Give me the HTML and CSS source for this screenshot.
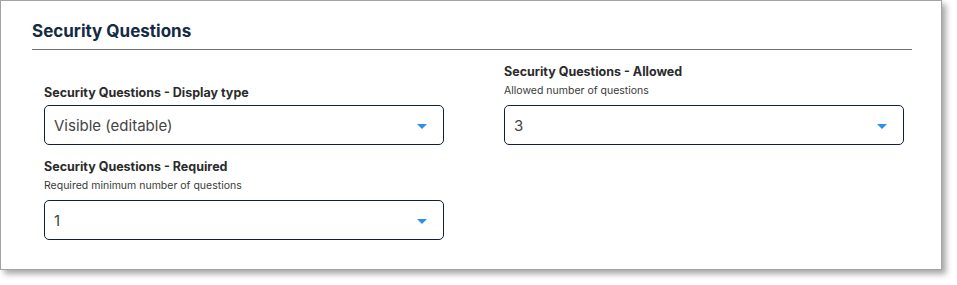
FILE: index.html
```html
<!DOCTYPE html>
<html lang="en">
<head>
<meta charset="utf-8">
<title>Security Questions</title>
<link rel="stylesheet" href="styles.css">
</head>
<body>
<div class="page">
<div class="card">
  <div class="card-header">
    <h2 class="card-title">Security Questions</h2>
  </div>
  <div class="fields">
    <div class="field">
      <div class="field-label">Security Questions - Display type</div>
      <div class="select">
        <span class="select-value">Visible (editable)</span>
        <svg class="caret" width="10" height="5" viewBox="0 0 10 5"><path d="M0 0H10L5 5Z" fill="#2a8ff0"/></svg>
      </div>
    </div>
    <div class="field">
      <div class="field-label">Security Questions - Allowed</div>
      <div class="field-help">Allowed number of questions</div>
      <div class="select">
        <span class="select-value">3</span>
        <svg class="caret" width="10" height="5" viewBox="0 0 10 5"><path d="M0 0H10L5 5Z" fill="#2a8ff0"/></svg>
      </div>
    </div>
    <div class="field">
      <div class="field-label">Security Questions - Required</div>
      <div class="field-help">Required minimum number of questions</div>
      <div class="select">
        <span class="select-value">1</span>
        <svg class="caret" width="10" height="5" viewBox="0 0 10 5"><path d="M0 0H10L5 5Z" fill="#2a8ff0"/></svg>
      </div>
    </div>
  </div>
</div>
</div>
</body>
</html>
```
FILE: styles.css
```css
html, body {
  margin: 0;
  padding: 0;
  background: #ffffff;
}

body {
  font-family: Inter, "Noto Sans", "Liberation Sans", sans-serif;
}

.page {
  min-height: 285px;
  box-sizing: border-box;
  padding-bottom: 14px;
}

.card {
  width: 942px;
  height: 270px;
  box-sizing: border-box;
  border: 1px solid #a3a3a3;
  background: #ffffff;
  box-shadow: 4px 4px 6px rgba(0, 0, 0, 0.35);
  padding: 18px 29px 0 31px;
}

.card-header {
  border-bottom: 1px solid #6f6f6f;
  padding-bottom: 6px;
}

.card-title {
  margin: 0;
  font-size: 17px;
  line-height: 24px;
  font-weight: 700;
  color: #142a44;
}

.fields {
  display: grid;
  grid-template-columns: 400px 400px;
  column-gap: 60px;
  row-gap: 14px;
  align-items: end;
  margin-top: 14px;
  padding-left: 12px;
}

.field {
  display: flex;
  flex-direction: column;
}

.field-label {
  font-size: 12.5px;
  line-height: 16px;
  font-weight: 700;
  color: #2b2b2b;
  margin-bottom: 4px;
}

.field-help {
  font-size: 10.5px;
  line-height: 14px;
  color: #3a3a3a;
  margin-bottom: 7px;
}

.select {
  height: 40px;
  box-sizing: border-box;
  border: 1px solid #0f2238;
  border-radius: 5px;
  display: flex;
  align-items: center;
  justify-content: space-between;
  padding: 0 16px 0 9px;
}

.select-value {
  font-size: 15px;
  color: #444444;
}

.caret {
  display: block;
  margin-top: 2px;
}
```
